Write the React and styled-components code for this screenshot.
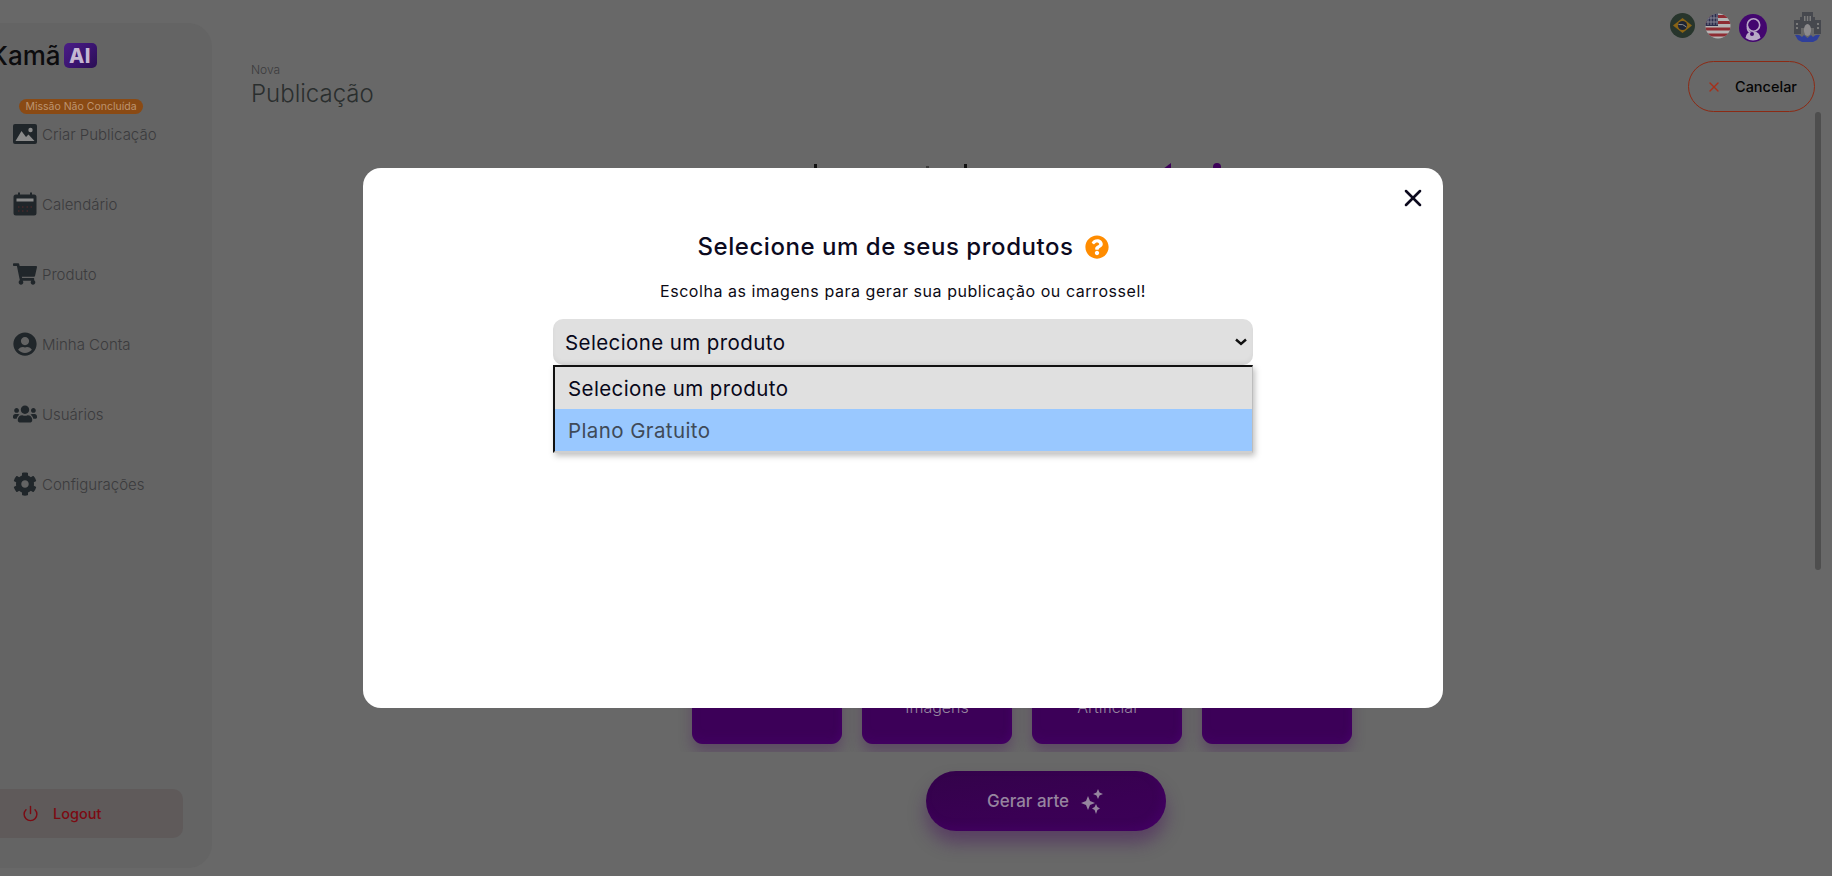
import React from 'react';
import styled, { createGlobalStyle } from 'styled-components';
import { FaUsers, FaCog, FaQuestionCircle, FaShoppingCart, FaUserCircle } from 'react-icons/fa';
import { FiPower } from 'react-icons/fi';
import { X } from 'lucide-react';

const FONT = `Inter, "Open Sans", "Liberation Sans", sans-serif`;

const Global = createGlobalStyle`
  html, body { margin: 0; padding: 0; height: 100%; overflow: hidden; background: #686868; }
  body { font-family: ${FONT}; }
  * { box-sizing: border-box; }
`;

const Page = styled.div`
  position: relative;
  display: flex;
  width: 1832px;
  height: 876px;
  overflow: hidden;
  background: #686868;
`;

const Sidebar = styled.aside`
  flex: 0 0 212px;
  height: 845px;
  margin-top: 23px;
  padding-top: 20px;
  display: flex;
  flex-direction: column;
  background: #646464;
  border-radius: 0 24px 24px 0;
`;

const Brand = styled.div`
  display: flex;
  align-items: center;
  gap: 3px;
  height: 25px;
  margin-left: -10px;
`;

const BrandName = styled.span`
  font-size: 26px;
  font-weight: 500;
  line-height: 25px;
  color: #0c0c0e;
`;

const BrandBadge = styled.span`
  width: 33px;
  height: 25px;
  border-radius: 5px;
  display: flex;
  align-items: center;
  justify-content: center;
  background: linear-gradient(135deg, #4a1d86 0%, #3a1470 55%, #2a0e52 100%);
  color: #c4b6d2;
  font-size: 20px;
  font-weight: 800;
  letter-spacing: 0.5px;
`;

const Nav = styled.nav`
  position: relative;
  margin-top: 31px;
  display: flex;
  flex-direction: column;
`;

const MissionBadge = styled.span`
  position: absolute;
  left: 19px;
  top: 0;
  width: 124px;
  height: 15px;
  border-radius: 8px;
  background: #8a4a14;
  color: #bd9470;
  font-size: 10.5px;
  line-height: 15px;
  text-align: center;
  white-space: nowrap;
`;

const NavItem = styled.div`
  height: 70px;
  padding-left: 13px;
  display: flex;
  align-items: center;
  gap: 5px;
  color: #3b3b3d;
  font-size: 15px;
  font-weight: 300;
  svg { width: 24px; height: 24px; color: #20262a; flex: none; }
`;

const Logout = styled.div`
  margin-top: auto;
  margin-bottom: 30px;
  width: 183px;
  height: 49px;
  padding-left: 22px;
  display: flex;
  align-items: center;
  gap: 14px;
  background: #5f5a5a;
  border-radius: 0 10px 10px 0;
  color: #7c0a12;
  font-size: 14.5px;
  font-weight: 500;
  svg { width: 17px; height: 17px; }
`;

const Main = styled.main`
  flex: 1;
  display: flex;
  flex-direction: column;
  min-width: 0;
`;

const TopBar = styled.div`
  height: 46px;
  padding: 12px 11px 0 0;
  display: flex;
  align-items: flex-start;
  justify-content: flex-end;
`;

const FlagSlot = styled.span`
  display: block;
  line-height: 0;
  margin-left: ${p => p.$gap}px;
  margin-top: ${p => p.$top}px;
`;

const HeadRow = styled.div`
  margin-top: 15px;
  height: 51px;
  padding: 0 17px 0 39px;
  display: flex;
  justify-content: space-between;
  align-items: flex-start;
`;

const HeadText = styled.div`
  padding-top: 1px;
  display: flex;
  flex-direction: column;
`;

const Over = styled.span`
  font-size: 12px;
  line-height: 16px;
  font-weight: 300;
  color: #3b3b3d;
`;

const PageTitle = styled.h1`
  margin: 0;
  font-size: 24px;
  line-height: 32px;
  font-weight: 300;
  color: #2a2e2e;
`;

const CancelButton = styled.button`
  width: 127px;
  height: 51px;
  display: flex;
  align-items: center;
  justify-content: center;
  gap: 13px;
  padding: 0;
  background: transparent;
  border: 1.5px solid #8c2a14;
  border-radius: 26px;
  color: #050505;
  font-family: ${FONT};
  font-size: 14.5px;
  font-weight: 500;
  svg { width: 16px; height: 16px; color: #a5301a; }
`;

const Stage = styled.section`
  padding-top: 51px;
  display: flex;
  flex-direction: column;
  align-items: center;
`;

const TitleTops = styled.svg`
  display: block;
  width: 420px;
  height: 6px;
`;

const CardsClip = styled.div`
  margin-top: 415px;
  padding: 0 20px 8px;
  overflow: hidden;
  display: flex;
  gap: 20px;
`;

const Card = styled.div`
  width: 150px;
  height: 160px;
  padding-bottom: 27px;
  display: flex;
  align-items: flex-end;
  justify-content: center;
  background: #3c0058;
  border-radius: 0 0 11px 11px;
  box-shadow: 0 8px 14px rgba(66, 0, 90, 0.3), inset 0 -5px 8px rgba(80, 0, 120, 0.25), inset -3px 0 6px rgba(80, 0, 120, 0.2);
  color: #96859f;
  font-size: 16px;
  line-height: 20px;
  font-weight: 300;
`;

const GenerateButton = styled.button`
  margin: 19px 0 0 48px;
  width: 240px;
  height: 60px;
  display: flex;
  align-items: center;
  justify-content: center;
  gap: 11px;
  padding: 0;
  border: 0;
  border-radius: 30px;
  background: linear-gradient(170deg, #33034a 0%, #3a0054 60%, #3c0058 100%);
  box-shadow: 0 12px 18px rgba(66, 0, 90, 0.4), inset -4px -4px 8px rgba(80, 0, 120, 0.3);
  color: #96859f;
  font-family: ${FONT};
  font-size: 17px;
  font-weight: 500;
`;

const ScrollThumb = styled.div`
  position: absolute;
  left: 1815px;
  top: 112px;
  width: 6px;
  height: 458px;
  border-radius: 3px;
  background: #4e4e4e;
`;

const ModalLayer = styled.div`
  position: absolute;
  inset: 0 26px 0 0;
  display: flex;
  align-items: center;
  justify-content: center;
`;

const Modal = styled.div`
  position: relative;
  width: 1080px;
  height: 540px;
  padding-top: 63px;
  display: flex;
  flex-direction: column;
  align-items: center;
  background: #fff;
  border-radius: 18px;
  color: #0c0a1e;
`;

const CloseButton = styled.button`
  position: absolute;
  top: 16px;
  right: 16px;
  width: 28px;
  height: 28px;
  padding: 0;
  display: flex;
  align-items: center;
  justify-content: center;
  background: transparent;
  border: 0;
  color: #0c0a1e;
  svg { width: 28px; height: 28px; }
`;

const TitleRow = styled.div`
  height: 32px;
  display: flex;
  align-items: center;
  gap: 11px;
  svg { width: 24px; height: 24px; color: #ff8c00; }
`;

const ModalTitle = styled.h2`
  margin: 0;
  font-size: 24px;
  line-height: 32px;
  font-weight: 500;
  letter-spacing: 0.55px;
`;

const Hint = styled.p`
  margin: 16px 0 0;
  font-size: 16px;
  line-height: 24px;
  font-weight: 400;
  letter-spacing: 0.55px;
  color: #0c0a14;
`;

const SelectWrap = styled.div`
  position: relative;
  width: 700px;
  margin-top: 16px;
`;

const SelectBox = styled.div`
  height: 46px;
  padding: 0 6px 0 12px;
  display: flex;
  align-items: center;
  justify-content: space-between;
  background: #e0e0e0;
  border-radius: 10px;
  box-shadow: inset 0 -3px 4px rgba(0, 0, 0, 0.04);
  font-size: 20.5px;
  letter-spacing: 0.4px;
  color: #08081a;
  svg { width: 12px; height: 8px; }
`;

const OptionList = styled.ul`
  position: absolute;
  left: 0;
  top: 46px;
  width: 700px;
  margin: 0;
  padding: 0;
  list-style: none;
  border-top: 2px solid #111;
  border-left: 2px solid #111;
  border-right: 1px solid #bdbdbd;
  border-bottom: 2px solid #cfcfcf;
  box-shadow: 2px 3px 6px rgba(0, 0, 0, 0.25);
  background: #e0e0e0;
`;

const Option = styled.li`
  height: 42px;
  padding-left: 13px;
  display: flex;
  align-items: center;
  font-size: 20.5px;
  letter-spacing: 0.4px;
  background: ${p => (p.$active ? '#99c8ff' : '#e0e0e0')};
  color: ${p => (p.$active ? '#3f4a58' : '#08081a')};
`;

const ImageIcon = () => (
  <svg viewBox="0 0 24 24" aria-hidden="true">
    <rect x="0" y="2" width="24" height="20" rx="2" fill="currentColor" />
    <circle cx="17.5" cy="8" r="2.2" fill="#8a8a8a" />
    <path d="M2.5 19 L8.5 9 L13 15 L15.5 12.5 L21.5 19 Z" fill="#8a8a8a" />
  </svg>
);

const CalendarIcon = () => (
  <svg viewBox="0 0 24 24" aria-hidden="true">
    <path d="M5 0.5h2v2h10v-2h2v2h2a2.5 2.5 0 0 1 2.5 2.5v16a2.5 2.5 0 0 1-2.5 2.5H3A2.5 2.5 0 0 1 .5 21V5A2.5 2.5 0 0 1 3 2.5h2Z" fill="currentColor" />
    <rect x="3.5" y="6.5" width="17" height="3" fill="#8a8a8a" />
    <path d="M5 15h1.5M9 15h1.5M13.5 15H15M17.5 15H19M5 19h1.5M9 19h1.5M13.5 19H15" stroke="#5a2a2a" strokeWidth="1" />
  </svg>
);

const Sparkles = () => (
  <svg width="25" height="25" viewBox="0 0 25 25" fill="currentColor" aria-hidden="true">
    <path d="M8 7 L10 12 L15 14 L10 16 L8 21 L6 16 L1 14 L6 12 Z" />
    <path d="M18 0 L19.5 3.5 L23 5 L19.5 6.5 L18 10 L16.5 6.5 L13 5 L16.5 3.5 Z" />
    <path d="M16 15 L17.4 18 L20 19.5 L17.4 21 L16 25 L14.6 21 L12 19.5 L14.6 18 Z" />
  </svg>
);

const BrazilFlag = () => (
  <svg width="25" height="25" viewBox="0 0 25 25" aria-hidden="true">
    <circle cx="12.5" cy="12.5" r="12.5" fill="#27352c" />
    <path d="M12.5 5 L22 12.5 L12.5 20 L3 12.5 Z" fill="#8a6414" />
    <circle cx="12.5" cy="12.5" r="4.6" fill="#1d2434" />
    <path d="M8.5 11.5 Q13 10.5 16.5 14" stroke="#8c8c8c" strokeWidth="1" fill="none" />
  </svg>
);

const UsaFlag = () => (
  <svg width="26" height="26" viewBox="0 0 26 26" aria-hidden="true">
    <defs><clipPath id="usa"><circle cx="13" cy="13" r="12.5" /></clipPath></defs>
    <g clipPath="url(#usa)">
      <rect width="26" height="26" fill="#b5b5b5" />
      <rect y="2" width="26" height="3" fill="#8e2c33" />
      <rect y="8" width="26" height="3" fill="#8e2c33" />
      <rect y="14.5" width="26" height="3" fill="#8e2c33" />
      <rect y="20.5" width="26" height="3" fill="#8e2c33" />
      <rect width="13" height="13" fill="#2c2d4c" />
      <path d="M3 3v9M6 1v11M9 1v11M12 1v11M1 5h12M1 9h12" stroke="#8d8d98" strokeWidth="0.9" />
    </g>
  </svg>
);

const SupportAvatar = () => (
  <svg width="28" height="28" viewBox="0 0 28 28" aria-hidden="true">
    <circle cx="14" cy="14" r="14" fill="#43066f" />
    <circle cx="14.5" cy="11" r="6.2" fill="none" stroke="#b9a8c6" strokeWidth="1.6" />
    <path d="M8.5 12 q-0.5 5 3 6.5" fill="none" stroke="#b9a8c6" strokeWidth="1.6" />
    <path d="M6.5 24 q1 -7 7.5 -6.5 q6.5 -0.5 7.5 6.5 Q14 29 6.5 24 Z" fill="#b9a8c6" />
    <circle cx="13" cy="20" r="2" fill="#43066f" />
  </svg>
);

const BuildingLogo = () => (
  <svg width="27" height="30" viewBox="0 0 27 30" aria-hidden="true">
    <path d="M8 0h11v5h2v3h6v14H20v-6H7v6H0V8h6V5h2Z" fill="#46484e" />
    <path d="M10 4h1.5v5H10zM12.8 4h1.5v5h-1.5zM15.5 4H17v5h-1.5zM2 11h2v2H2zM2 15h2v2H2zM23 11h2v2h-2zM23 15h2v2h-2z" fill="#7a7a7a" />
    <ellipse cx="13.5" cy="18" rx="3.6" ry="6" fill="#8c8a8c" />
    <path d="M1 23 q4 -1 7 2 l2 -2 l3.5 3 l3.5 -3 l2 2 q3 -3 7 -2 l-3 5 l-4 2 h-11 l-4 -2 Z" fill="#2f3f9a" />
  </svg>
);

const NAV = [
  [ImageIcon, 'Criar Publicação'],
  [CalendarIcon, 'Calendário'],
  [FaShoppingCart, 'Produto'],
  [FaUserCircle, 'Minha Conta'],
  [FaUsers, 'Usuários'],
  [FaCog, 'Configurações'],
];

export default function App() {
  return (
    <Page>
      <Global />
      <Sidebar>
        <Brand>
          <BrandName>Kamã</BrandName>
          <BrandBadge>AI</BrandBadge>
        </Brand>
        <Nav>
          {NAV.map(([Icon, label]) => (
            <NavItem key={label}>
              <Icon />
              {label}
            </NavItem>
          ))}
          <MissionBadge>Missão Não Concluída</MissionBadge>
        </Nav>
        <Logout>
          <FiPower />
          Logout
        </Logout>
      </Sidebar>
      <Main>
        <TopBar>
          <FlagSlot $gap={0} $top={1}><BrazilFlag /></FlagSlot>
          <FlagSlot $gap={10} $top={1}><UsaFlag /></FlagSlot>
          <FlagSlot $gap={8} $top={2}><SupportAvatar /></FlagSlot>
          <FlagSlot $gap={27} $top={0}><BuildingLogo /></FlagSlot>
        </TopBar>
        <HeadRow>
          <HeadText>
            <Over>Nova</Over>
            <PageTitle>Publicação</PageTitle>
          </HeadText>
          <CancelButton><X strokeWidth={2} />Cancelar</CancelButton>
        </HeadRow>
        <Stage>
          <TitleTops viewBox="0 0 420 6" aria-hidden="true">
            <rect x="2" y="1" width="3" height="5" fill="#111" />
            <rect x="114" y="3" width="3" height="3" fill="#3b3b3b" />
            <rect x="152" y="1" width="3" height="5" fill="#111" />
            <path d="M351 6 L359 0 V6 Z" fill="#3c0058" />
            <circle cx="405" cy="4" r="4" fill="#3c0058" />
          </TitleTops>
          <CardsClip>
            <Card />
            <Card>Imagens</Card>
            <Card>Artificial</Card>
            <Card />
          </CardsClip>
          <GenerateButton>Gerar arte<Sparkles /></GenerateButton>
        </Stage>
      </Main>
      <ScrollThumb />
      <ModalLayer>
        <Modal>
          <CloseButton><X strokeWidth={2.2} /></CloseButton>
          <TitleRow>
            <ModalTitle>Selecione um de seus produtos</ModalTitle>
            <FaQuestionCircle />
          </TitleRow>
          <Hint>Escolha as imagens para gerar sua publicação ou carrossel!</Hint>
          <SelectWrap>
            <SelectBox>
              Selecione um produto
              <svg viewBox="0 0 12 8" aria-hidden="true"><path d="M1 1.5 L6 6 L11 1.5" fill="none" stroke="#111" strokeWidth="2.4" /></svg>
            </SelectBox>
            <OptionList>
              <Option>Selecione um produto</Option>
              <Option $active>Plano Gratuito</Option>
            </OptionList>
          </SelectWrap>
        </Modal>
      </ModalLayer>
    </Page>
  );
}
